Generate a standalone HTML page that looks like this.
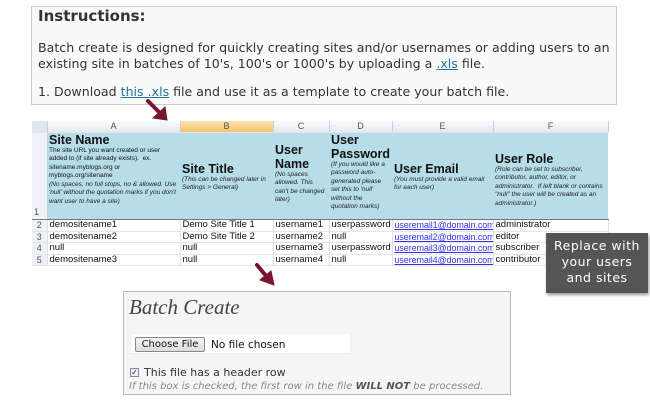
<!DOCTYPE html>
<html><head><style>
*{margin:0;padding:0;box-sizing:border-box}
body{width:650px;height:406px;background:#fff;position:relative;overflow:hidden;font-family:"DejaVu Sans",Verdana,sans-serif}
.instr{position:absolute;left:31px;top:6px;width:586px;height:99px;background:#f9f9f9;border:1px solid #ccc;color:#333;font-size:12.6px;white-space:nowrap}
.instr div{position:absolute;left:6px}
.instr h3{position:absolute;left:6px;top:0px;font-size:15px;font-weight:bold;line-height:18px}
a{color:#21759b;text-decoration:underline}
.sheet{position:absolute;left:32px;top:121px;font-family:"Liberation Sans",Arial,sans-serif}
table{border-collapse:collapse;table-layout:fixed;width:576px}
td{border-right:1px solid #e0e0e0;border-bottom:1px solid #e4e4e4;font-size:9.5px;color:#111;padding:0 2px;height:11.5px;line-height:10px;white-space:nowrap;overflow:hidden}
tr.cols td{background:linear-gradient(#fafbfd,#e4e9f1);color:#555;text-align:center;height:11px;font-size:9px;border-right:1px solid #ccd}
tr.cols td.sel{background:linear-gradient(#fbe2a8,#f6c46f)}
td.rn{background:#eef1f6;color:#555;text-align:center;font-size:9px;padding:0}
tr.hd td{background:#b7dde8;vertical-align:bottom;white-space:normal;border-right:none;border-bottom:1px solid #777;padding-bottom:2px;line-height:normal}
tr.hd td.rn{background:#eef1f6;text-align:left;padding-left:2px}
.hd b{font-size:12.5px;display:block;line-height:14px}
.hd i{font-size:6.5px;line-height:8.5px;display:block;color:#222}
.hd s{text-decoration:none;font-size:6.5px;line-height:8.5px;display:block}
.em{color:#3333ee;text-decoration:underline;font-size:9px;letter-spacing:-0.1px}
.tip{position:absolute;left:546px;top:233px;width:102px;height:60px;background:#555;color:#fff;font-family:"DejaVu Sans",sans-serif;font-size:12.5px;line-height:16px;text-align:center;padding-top:5px;letter-spacing:.5px;box-shadow:1px 2px 3px #999}
.bc{position:absolute;left:123px;top:291px;width:388px;height:104px;background:#f5f5f5;border:1px solid #bbb;color:#333}
.bc h2{font-family:"Liberation Serif",Georgia,serif;font-style:italic;font-weight:normal;font-size:21px;position:absolute;left:5px;top:3px;color:#444}
.file{position:absolute;left:6px;top:41px;width:221px;height:21px;background:#fff;border:1px solid #eee}
.btn{position:absolute;left:4px;top:3px;width:70px;height:15px;border:1px solid #888;border-radius:2px;background:linear-gradient(#f4f4f4,#ddd);font-family:"DejaVu Sans",sans-serif;font-size:10px;text-align:center;line-height:13px;color:#111}
.nf{position:absolute;left:80px;top:5px;font-size:10.5px;color:#111}
.cb{position:absolute;left:6px;top:76px;width:9px;height:9px;border:1px solid #889;background:#eef;font-size:8px;line-height:8px;color:#226;text-align:center}
.cbl{position:absolute;left:20px;top:74px;font-size:11px;color:#333}
.note{position:absolute;left:5px;top:89px;font-size:10px;font-style:italic;color:#888;white-space:nowrap}
.note b{color:#555}
</style></head><body>
<div class="instr">
<h3>Instructions:</h3>
<div style="top:33px;line-height:16px">Batch create is designed for quickly creating sites and/or usernames or adding users to an<br>existing site in batches of 10's, 100's or 1000's by uploading a <a>.xls</a> file.</div>
<div style="top:77px;line-height:16px">1. Download <a>this .xls</a> file and use it as a template to create your batch file.</div>
</div>
<div class="sheet"><table>
<colgroup><col style="width:15px"><col style="width:133px"><col style="width:93px"><col style="width:56px"><col style="width:63px"><col style="width:101px"><col style="width:115px"></colgroup>
<tr class="cols"><td style="background:#dfe6f0"></td><td>A</td><td class="sel">B</td><td>C</td><td>D</td><td>E</td><td>F</td></tr>
<tr class="hd" style="height:84px"><td class="rn">1</td>
<td><b>Site Name</b><s>The site URL you want created or user added to (if site already exists). &nbsp;ex. sitename.myblogs.org or myblogs.org/sitename</s><i>(No spaces, no full stops, no &amp; allowed. Use 'null' without the quotation marks if you don't want user to have a site)</i><br></td>
<td style="vertical-align:top;padding-top:29px"><b>Site Title</b><i>(This can be changed later in Settings &gt; General)</i></td>
<td style="vertical-align:top;padding-top:10px"><b>User Name</b><i>(No spaces allowed. This can't be changed later)</i></td>
<td style="vertical-align:top;padding-top:0"><b>User Password</b><i>(If you would like a password auto-generated please set this to 'null' without the quotation marks)</i></td>
<td style="vertical-align:top;padding-top:29px"><b>User Email</b><i>(You must provide a valid email for each user)</i></td>
<td style="vertical-align:top;padding-top:19px"><b>User Role</b><i>(Role can be set to subscriber, contributor, author, editor, or administrator. &nbsp;If left blank or contains "null" the user will be created as an administrator.)</i></td></tr>
<tr><td class="rn">2</td><td>demositename1</td><td>Demo Site Title 1</td><td>username1</td><td>userpassword</td><td class="em">useremail1@domain.com</td><td>administrator</td></tr>
<tr><td class="rn">3</td><td>demositename2</td><td>Demo Site Title 2</td><td>username2</td><td>null</td><td class="em">useremail2@domain.com</td><td>editor</td></tr>
<tr><td class="rn">4</td><td>null</td><td>null</td><td>username3</td><td>userpassword</td><td class="em">useremail3@domain.com</td><td>subscriber</td></tr>
<tr><td class="rn">5</td><td>demositename3</td><td>null</td><td>username4</td><td>null</td><td class="em">useremail4@domain.com</td><td>contributor</td></tr>
</table></div>
<div class="tip">Replace with<br>your users<br>and sites</div>
<svg style="position:absolute;left:0;top:0" width="650" height="406">
<g fill="#7a1530" stroke="#7a1530" stroke-width="4" stroke-linecap="round">
<line x1="148" y1="101" x2="160" y2="113"/><polygon points="167,120 153,118 165,107" stroke-width="1"/>
<line x1="257" y1="265" x2="267" y2="277"/><polygon points="274,285 260,280 271,271" stroke-width="1"/>
</g></svg>
<div class="bc">
<h2>Batch Create</h2>
<div class="file"><div class="btn">Choose File</div><div class="nf">No file chosen</div></div>
<div class="cb">✓</div><div class="cbl">This file has a header row</div>
<div class="note">If this box is checked, the first row in the file <b>WILL NOT</b> be processed.</div>
</div>
</body></html>
